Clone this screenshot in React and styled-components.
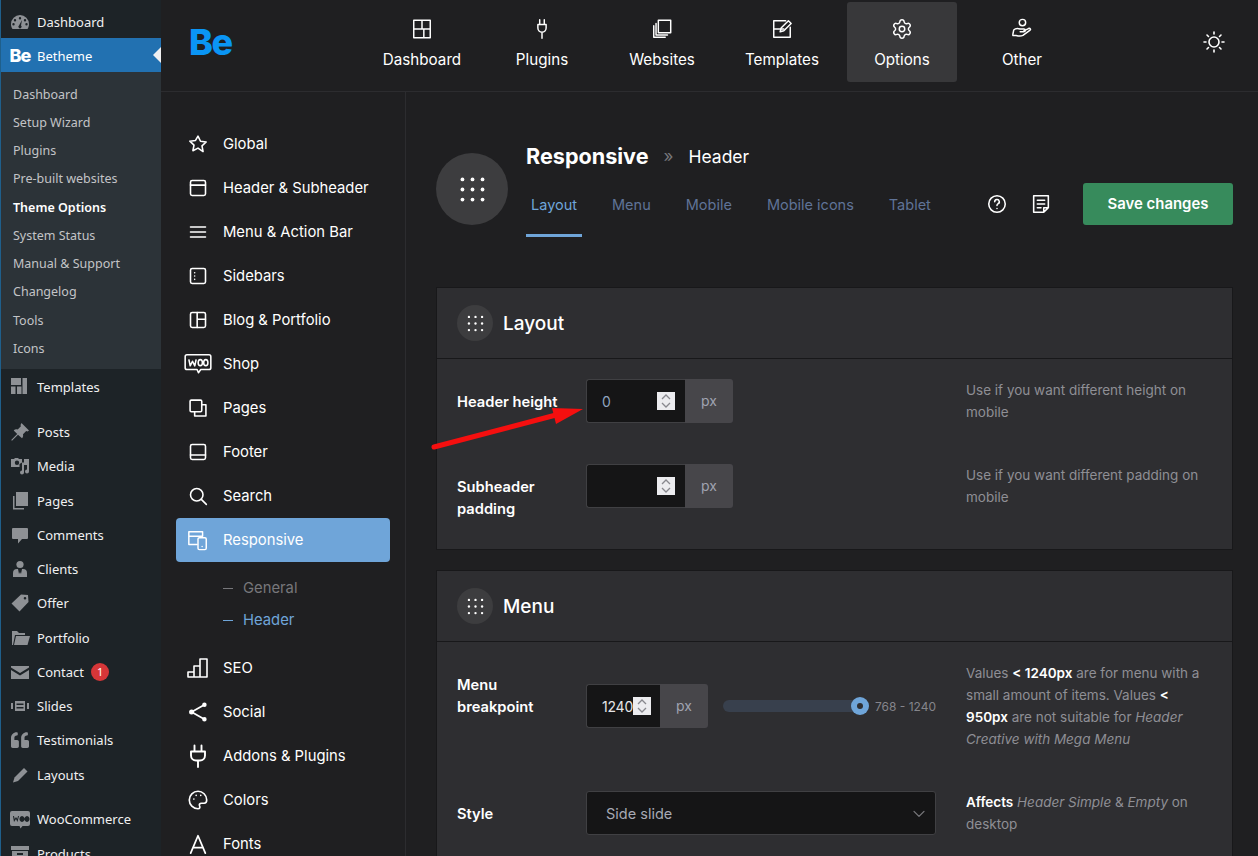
import React from "react"
import styled, { createGlobalStyle } from "styled-components"
import { Settings } from "lucide-react"
import { FaQuoteLeft } from "react-icons/fa"

const Global = createGlobalStyle`
  * { box-sizing: border-box; }
  html, body { margin: 0; height: 100%; overflow: hidden; background: #1f1f21; }
  body { font-family: Inter, "Liberation Sans", sans-serif; }
`

const Page = styled.div`
  position: relative;
  display: flex;
  width: 1258px;
  height: 856px;
  overflow: hidden;
`

/* wp admin menu */
const WpMenu = styled.nav`
  width: 161px;
  flex: none;
  background: #1d2327;
  border-left: 1px solid #1f5f8b;
  font-family: "Noto Sans", "Open Sans", sans-serif;
  font-size: 13px;
  padding-top: 5px;
  color: #f0f0f1;
`

const WpRow = styled.div`
  position: relative;
  display: flex;
  align-items: center;
  height: ${p => p.$h || 34.25}px;
  margin-top: ${p => p.$gap || 0}px;
  padding-left: 9px;
  padding-top: ${p => (p.$active ? 1 : 0)}px;
  gap: 7px;
  background: ${p => (p.$active ? "#2271b1" : "transparent")};
  color: ${p => (p.$active ? "#fff" : "#f0f0f1")};
  svg { flex: none; }
`

const WpIcon = styled.span`
  display: flex;
  align-items: center;
  justify-content: center;
  width: 20px;
  height: 20px;
  flex: none;
  color: ${p => p.$color || "#8e9195"};
`

const WpCaret = styled.span`
  position: absolute;
  right: 0;
  top: 50%;
  margin-top: -8px;
  border: 8px solid transparent;
  border-right-color: #f0f0f1;
  border-left: 0;
`

const WpSub = styled.div`
  background: #2c3338;
  padding: 8.5px 0 6px 12px;
`

const WpSubItem = styled.div`
  height: 28.25px;
  line-height: 28.25px;
  font-size: 12.5px;
  color: ${p => (p.$current ? "#fff" : "#c3c4c7")};
  font-weight: ${p => (p.$current ? 600 : 400)};
`

const WpLogo = styled.span`
  font-family: Inter, sans-serif;
  font-weight: 800;
  font-size: 18px;
  letter-spacing: -1px;
  line-height: 20px;
  color: #fff;
`

const Badge = styled.span`
  display: inline-block;
  width: 18px;
  height: 18px;
  line-height: 18px;
  border-radius: 50%;
  text-align: center;
  background: #d63638;
  color: #fff;
  font-size: 11px;
`

/* betheme app */
const App_ = styled.div`
  flex: 1;
  min-width: 0;
  display: flex;
  flex-direction: column;
`

const TopBar = styled.header`
  display: flex;
  height: 92px;
  flex: none;
  padding-top: 2px;
  border-bottom: 1px solid #2c2c2f;
`

const Logo = styled.div`
  width: 206px;
  flex: none;
  padding: 18px 0 0 28px;
  font-weight: 800;
  font-size: 36px;
  line-height: 44px;
  letter-spacing: -1.5px;
  color: #0a95f5;
`

const TopNav = styled.div`
  display: flex;
  gap: 10px;
`

const TopItem = styled.div`
  width: 110px;
  height: 80px;
  display: flex;
  flex-direction: column;
  align-items: center;
  padding-top: 16px;
  gap: 10px;
  border-radius: 3px;
  background: ${p => (p.$active ? "#38383a" : "transparent")};
  color: #fff;
  font-size: 15.2px;
  line-height: 20px;
  svg { height: 22px; flex: none; }
`

const ThemeToggle = styled.div`
  margin: 28px 0 0 125px;
  width: 24px;
  height: 24px;
  color: #fff;
`

const Body = styled.div`
  display: flex;
  flex: 1;
  min-height: 0;
`

const SideNav = styled.aside`
  width: 245px;
  flex: none;
  padding: 30px 15px 0;
  border-right: 1px solid #2c2c2f;
`

const SideItem = styled.div`
  display: flex;
  align-items: center;
  height: 44px;
  padding-left: 12px;
  gap: 15px;
  border-radius: 4px;
  font-size: 14.8px;
  color: #fff;
  background: ${p => (p.$active ? "#6fa5d9" : "transparent")};
`

const SideIcon = styled.span`
  display: flex;
  align-items: center;
  justify-content: center;
  width: 20px;
  height: 20px;
  flex: none;
  svg { flex: none; }
`

const SubList = styled.div`
  padding: 10px 0 10px 47px;
`

const SubLink = styled.div`
  display: flex;
  align-items: center;
  height: 32px;
  gap: 10px;
  font-size: 14.8px;
  color: ${p => (p.$active ? "#6fa5d9" : "#77777b")};
  &::before {
    content: "";
    width: 10px;
    height: 1px;
    background: currentColor;
  }
`

const Main = styled.main`
  flex: 1;
  min-width: 0;
  padding: 61px 25px 0 30px;
`

const PageHead = styled.div`
  display: flex;
  align-items: flex-start;
  height: 134px;
`

const HeadCircle = styled.div`
  width: 72px;
  height: 72px;
  flex: none;
  border-radius: 50%;
  background: #3d3d3f;
  display: flex;
  align-items: center;
  justify-content: center;
  margin-right: 18px;
  color: #fff;
`

const HeadMid = styled.div`
  width: 451px;
  flex: none;
`

const Crumbs = styled.div`
  display: flex;
  align-items: center;
  height: 30px;
  margin-top: -12px;
  color: #fff;
`

const Title = styled.span`
  font-size: 21.6px;
  font-weight: 700;
`

const Sep = styled.span`
  margin: 0 15px;
  font-size: 17px;
  color: #77777b;
`

const SubTitle = styled.span`
  margin-top: 1px;
  font-size: 17.5px;
`

const Tabs = styled.div`
  display: flex;
  margin-top: 17px;
  gap: 25px;
`

const Tab = styled.div`
  position: relative;
  height: 49px;
  line-height: 34px;
  padding: 0 5px;
  font-size: 14.5px;
  color: ${p => (p.$active ? "#6fa5d9" : "#5f7397")};
  ${p => p.$active && `
    &::after {
      content: "";
      position: absolute;
      left: 0;
      right: 0;
      bottom: 0;
      height: 3px;
      background: #6fa5d9;
    }
  `}
`

const HeadActions = styled.div`
  display: flex;
  align-items: center;
  margin-top: 30px;
  margin-left: 9px;
  color: #fff;
`

const ActionIcon = styled.span`
  display: flex;
  width: 22px;
  height: 22px;
  margin-right: 22px;
`

const SaveButton = styled.button`
  width: 150px;
  height: 42px;
  margin-left: 9px;
  border: 0;
  border-radius: 3px;
  background: #378b5c;
  color: #fff;
  font-family: inherit;
  font-weight: 600;
  font-size: 14.9px;
`

const Card = styled.section`
  background: #2e2e31;
  border: 1px solid #18181a;
  margin-bottom: 20px;
`

const CardHead = styled.div`
  display: flex;
  align-items: center;
  height: 71px;
  padding-left: 20px;
  gap: 10px;
  border-bottom: 1px solid #18181a;
  color: #fff;
  font-size: 19px;
  font-weight: 500;
`

const CardDot = styled.span`
  width: 36px;
  height: 36px;
  border-radius: 50%;
  background: #3d3d3f;
  display: flex;
  align-items: center;
  justify-content: center;
`

const CardBody = styled.div`
  padding-top: 20px;
`

const Row = styled.div`
  display: grid;
  grid-template-columns: 129px 350px 1fr;
  align-items: center;
  padding: 0 20px 41px;
`

const Label = styled.div`
  align-self: start;
  max-width: 110px;
  padding-top: 12px;
  margin-bottom: -12px;
  font-size: 14.7px;
  font-weight: 600;
  line-height: 22px;
  color: #fff;
`

const Control = styled.div`
  display: flex;
  align-items: center;
`

const NumberBox = styled.div`
  display: flex;
  align-items: center;
  justify-content: space-between;
  width: ${p => p.$w}px;
  height: 44px;
  padding: 0 10px 0 ${p => p.$pad}px;
  background: #151516;
  border: 1px solid #404043;
  border-right: 0;
  border-radius: 3px 0 0 3px;
  color: ${p => (p.$light ? "#e5e5e8" : "#8fa3bf")};
  font-size: 14px;
  letter-spacing: -0.2px;
`

const Spin = styled.span`
  display: flex;
  width: 18px;
  height: 18px;
  flex: none;
  background: #ececef;
  color: #88888e;
`

const Unit = styled.div`
  width: 48px;
  height: 44px;
  line-height: 44px;
  text-align: center;
  background: #47464a;
  border-radius: 0 3px 3px 0;
  font-size: 14px;
  color: #a0a3b0;
`

const Track = styled.div`
  position: relative;
  width: 137px;
  height: 12px;
  margin-left: 15px;
  background: #38404d;
  border-radius: 6px;
`

const Thumb = styled.span`
  position: absolute;
  right: -9px;
  top: -3px;
  width: 18px;
  height: 18px;
  border-radius: 50%;
  background: #6fa5d9;
  &::after {
    content: "";
    position: absolute;
    left: 6px;
    top: 6px;
    width: 6px;
    height: 6px;
    border-radius: 50%;
    background: #2e2e31;
  }
`

const Range = styled.span`
  margin-left: 15px;
  font-size: 12px;
  white-space: nowrap;
  color: #85858b;
`

const Select = styled.div`
  display: flex;
  align-items: center;
  justify-content: space-between;
  width: 350px;
  height: 44px;
  padding: 0 6px 0 19px;
  background: #151516;
  border: 1px solid #404043;
  border-radius: 3px;
  font-size: 14.5px;
  color: #a7a9b4;
  svg { color: #77777b; }
`

const Desc = styled.div`
  padding-left: 30px;
  font-size: 13.5px;
  line-height: 22px;
  color: #8f8f95;
  b { color: #fff; font-weight: 600; }
  em { font-style: italic; }
`

const Arrow = styled.svg`
  position: absolute;
  left: 425px;
  top: 400px;
  pointer-events: none;
`

/* icons */
const Stroke = ({ size = 22, w = 1.6, children }) => (
  <svg width={size} height={size} viewBox="0 0 24 24" fill="none" stroke="currentColor" strokeWidth={w} strokeLinecap="round" strokeLinejoin="round">
    {children}
  </svg>
)

const Solid = ({ children, size = 20 }) => (
  <svg width={size} height={size} viewBox="0 0 20 20" fill="currentColor">{children}</svg>
)

const Dots = ({ size = 29, r = 1.7 }) => (
  <svg width={size} height={size} viewBox="0 0 26 26" fill="#fff">
    {[4, 13, 22].map(y => [4, 13, 22].map(x => <circle key={`${x}-${y}`} cx={x} cy={y} r={r} />))}
  </svg>
)

const wpIcons = {
  dashboard: <Solid><path fillRule="evenodd" d="M10 3a9 9 0 0 0-9 9c0 2 .6 3.600 1.500 5h15c.9-1.400 1.500-3 1.500-5a9 9 0 0 0-9-9zM10 5a1.200 1.200 0 1 1 0 2.400A1.200 1.200 0 0 1 10 5zM5 7a1.200 1.200 0 1 1 0 2.400A1.200 1.200 0 0 1 5 7zm10 0a1.200 1.200 0 1 1 0 2.400A1.200 1.200 0 0 1 15 7zM3.500 11a1.200 1.200 0 1 1 0 2.400 1.200 1.200 0 0 1 0-2.400zm13 0a1.200 1.200 0 1 1 0 2.400 1.200 1.200 0 0 1 0-2.400zM12 8l-1 5.500a1.600 1.600 0 1 1-2 0z" /></Solid>,
  templates: <Solid size={20}><path d="M1 1h10v7H1zM12.500 1H17v16h-4.500zM1 9.500h4.500V17H1zM7 9.500h4.500V17H7z" /></Solid>,
  posts: <Solid><path d="M11.500 1l7.500 7.500-1.500 1-1.300-.4-3.200 3.200c.4 1.700 0 3-1 4L8 12.800l-6 6L1.200 18l6-6L3.700 8.500c1-1 2.300-1.400 4-1l3.200-3.200-.4-1.300z" /></Solid>,
  media: <Solid><path fillRule="evenodd" d="M1 3h3l1-1h3l1 1h3v3.500L9.500 8v3H1zm6 1.500a2.200 2.200 0 1 0 0 4.400 2.200 2.200 0 0 0 0-4.400z" /><path d="M14 3h5v12.500a2 2 0 1 1-2-2V9h-3v7.500a2 2 0 1 1-2-2V6.500h2z" /></Solid>,
  pages: <Solid><path d="M6 1h12v14H6z" /><path d="M3 5h1.500v12H14v1.500H3z" /></Solid>,
  comments: <Solid><path d="M3 3h14a1 1 0 0 1 1 1v9a1 1 0 0 1-1 1h-5l-4 4.500V14H3a1 1 0 0 1-1-1V4a1 1 0 0 1 1-1z" /></Solid>,
  clients: <Solid><circle cx="10" cy="5.500" r="3.600" /><path d="M3 18v-4a4 4 0 0 1 4-4h1l1 5 1-2 1 2 1-5h1a4 4 0 0 1 4 4v4z" /></Solid>,
  offer: <Solid><path fillRule="evenodd" d="M11 1.500l7 .5.500 7-9 9.500-8-8zM15 4a1.300 1.300 0 1 0 0 2.600A1.300 1.300 0 0 0 15 4z" /></Solid>,
  portfolio: <Solid><path d="M2 3h5l2 2h6v2H5l-2 10-1 .1zM6 8h14l-2.500 9H4z" /></Solid>,
  contact: <Solid><path d="M1 4h18v1.500l-9 5.500-9-5.500zM1 8l9 5.500L19 8v9H1z" /></Solid>,
  slides: <Solid><path fillRule="evenodd" d="M5 5h10v10H5zm1.500 2.500v1.500h7V7.500zm0 3.500v1.500h7V11z" /><path d="M1 7h2v6H1zM17 7h2v6h-2z" /></Solid>,
  testimonials: <FaQuoteLeft size={18} />,
  layouts: <Solid><path d="M14 3l3.500 3.500L8 16l-5 1.500L4.500 12.500z" /></Solid>,
  woo: <Solid><path fillRule="evenodd" d="M2 2h16a2 2 0 0 1 2 2v11a2 2 0 0 1-2 2h-5.500l-2 2.500-1-2.500H2a2 2 0 0 1-2-2V4a2 2 0 0 1 2-2zM3 7l1 6 2-3 1.500 3L9 7H8l-.7 3L6 8 4.700 10 4 7zm9 0a2.500 3 0 1 0 .01 0zm5 0a2.500 3 0 1 0 .01 0z" /></Solid>,
  products: <Solid><path fillRule="evenodd" d="M1 2h18v4H1zM2 7h16v11H2zm5 2v2h6V9z" /></Solid>
}

const HandIcon = () => (
  <Stroke size={22}>
    <circle cx="12.500" cy="5" r="3.500" />
    <path d="M2 18l1-5c2-2 4-2 7-1h4a1.500 1.500 0 0 1 0 3h-4" />
    <path d="M14 14l5-2.500c2-.8 3 1 1.500 2L13 19c-3 1.500-5 .8-8 0H2" />
  </Stroke>
)

const topItems = [
  ["Dashboard", <Stroke><path d="M3 2.500h18v19H3zM12 2.500V12M3 12h18M14 12v9.500" /></Stroke>],
  ["Plugins", <Stroke><path d="M9.500 2v5M14.500 2v5M7.500 7h9v4a4.500 4.500 0 0 1-9 0zM12 15.500V22" /></Stroke>],
  ["Websites", <Stroke><path d="M8 2.500h13.500V16H8zM5.500 6v12.500H18M3 8.500V21h12.500" /></Stroke>],
  ["Templates", <Stroke><path d="M21 10v11H3V3h13M3 12h11" /><path d="M19 3l3 3-8 8-4 1 1-4z" /></Stroke>],
  ["Options", <Settings size={22} strokeWidth={1.6} />],
  ["Other", <HandIcon />]
]

const sideItems = [
  ["Global", <Stroke size={20} w={1.9}><path d="M12 2.500l3 6.200 6.800.9-5 4.700 1.300 6.800L12 17l-6.100 3.100 1.300-6.800-5-4.700 6.800-.9z" /></Stroke>],
  ["Header & Subheader", <Stroke size={20} w={1.9}><rect x="3" y="3" width="18" height="18" rx="2" /><path d="M3 8.500h18" /></Stroke>],
  ["Menu & Action Bar", <Stroke size={20} w={1.9}><path d="M3 6h18M3 12h18M3 18h18" /></Stroke>],
  ["Sidebars", <Stroke size={20} w={1.9}><rect x="3" y="3" width="18" height="18" rx="2" /><path d="M8 8v.01M8 12v.01M8 16v.01" /></Stroke>],
  ["Blog & Portfolio", <Stroke size={20} w={1.9}><rect x="3" y="3" width="18" height="18" rx="2" /><path d="M11 3v18M11 11h10" /></Stroke>],
  ["Shop", (
    <svg width="28" height="22" viewBox="0 0 30 24" fill="none" stroke="#fff" strokeWidth="1.700" strokeLinejoin="round">
      <path d="M3 2h24a2 2 0 0 1 2 2v12a2 2 0 0 1-2 2H18l-2.500 3.500L14 18H3a2 2 0 0 1-2-2V4a2 2 0 0 1 2-2z" />
      <path d="M5 7l1.500 7 2.500-5 2.500 5L13 7" />
      <ellipse cx="17.500" cy="10.500" rx="2.300" ry="3.300" />
      <ellipse cx="23.500" cy="10.500" rx="2.300" ry="3.300" />
    </svg>
  )],
  ["Pages", <Stroke size={20} w={1.9}><rect x="2.500" y="2.500" width="14" height="14" rx="1.500" /><path d="M16.500 8h5v13.500H8v-5" /></Stroke>],
  ["Footer", <Stroke size={20} w={1.9}><rect x="3" y="3" width="18" height="18" rx="2" /><path d="M3 15.500h18" /></Stroke>],
  ["Search", <Stroke size={20} w={1.9}><circle cx="10.500" cy="10.500" r="7.500" /><path d="M16 16l6 6" /></Stroke>],
  ["Responsive", <Stroke size={22} w={1.6}><path d="M17 8V3H2v14h9M2 8h15" /><rect x="12" y="9.500" width="9" height="13" rx="1.500" /><path d="M16.500 19v.01" /></Stroke>],
  ["SEO", <Stroke size={24} w={1.6}><path d="M2 21v-5h6v5zM8 21V10h6v11zM14 21V3h7v18zM2 21h19" /></Stroke>],
  ["Social", <Stroke size={22} w={1.9}><path d="M19 4L5 12l14 8" /><circle cx="19" cy="4" r="1.500" fill="#fff" /><circle cx="5" cy="12" r="1.800" fill="#fff" /><circle cx="19" cy="20" r="1.500" fill="#fff" /></Stroke>],
  ["Addons & Plugins", <Stroke size={24} w={1.9}><path d="M8.500 1.500v6M15.500 1.500v6M5 7.500h14v4a5 5 0 0 1-5 5h-4a5 5 0 0 1-5-5zM12 16.500V23" /></Stroke>],
  ["Colors", <Stroke size={22} w={1.8}><path d="M12 2.500a9.500 9.500 0 0 0 0 19c2 0 2.500-1.500 1.700-3-.8-1.600.3-3 2-3h3c1.800 0 2.800-1.500 2.800-3.500 0-5.500-4.500-9.500-9.500-9.500z" /><path d="M7.500 11v.01M10 7v.01M15 7v.01" /></Stroke>],
  ["Fonts", <Stroke size={22} w={1.9}><path d="M4 22L12 3l8 19M6.500 16h11" /></Stroke>]
]

const wpTop = [
  ["Posts", "posts"], ["Media", "media"], ["Pages", "pages"], ["Comments", "comments"], ["Clients", "clients"],
  ["Offer", "offer"], ["Portfolio", "portfolio"], ["Contact", "contact"], ["Slides", "slides"],
  ["Testimonials", "testimonials"], ["Layouts", "layouts"]
]

const subItems = ["Dashboard", "Setup Wizard", "Plugins", "Pre-built websites", "Theme Options", "System Status", "Manual & Support", "Changelog", "Tools", "Icons"]

const Chevrons = () => (
  <svg width="18" height="18" viewBox="0 0 18 18" fill="none" stroke="currentColor" strokeWidth="1.300">
    <path d="M5 7l4-4 4 4M5 11l4 4 4-4" />
  </svg>
)

const NumberField = ({ value, w = 99, pad = 15, light }) => (
  <>
    <NumberBox $w={w} $pad={pad} $light={light}>
      <span>{value}</span>
      <Spin><Chevrons /></Spin>
    </NumberBox>
    <Unit>px</Unit>
  </>
)

const SectionHead = ({ children }) => (
  <CardHead>
    <CardDot><Dots size={19} r={1.6} /></CardDot>
    {children}
  </CardHead>
)

const App = () => {
  return (
    <Page>
      <Global />
      <WpMenu>
        <WpRow $h={33}>
          <WpIcon>{wpIcons.dashboard}</WpIcon>
          Dashboard
        </WpRow>
        <WpRow $h={34} $active>
          <WpIcon $color="#fff"><WpLogo>Be</WpLogo></WpIcon>
          Betheme
          <WpCaret />
        </WpRow>
        <WpSub>
          {subItems.map(item => (
            <WpSubItem key={item} $current={item === "Theme Options"}>{item}</WpSubItem>
          ))}
        </WpSub>
        <WpRow $h={36}>
          <WpIcon>{wpIcons.templates}</WpIcon>
          Templates
        </WpRow>
        <WpRow $gap={10}>
          <WpIcon>{wpIcons.posts}</WpIcon>
          Posts
        </WpRow>
        {wpTop.slice(1).map(([label, icon]) => (
          <WpRow key={label}>
            <WpIcon>{wpIcons[icon]}</WpIcon>
            {label}
            {label === "Contact" && <Badge>1</Badge>}
          </WpRow>
        ))}
        <WpRow $gap={10.5}>
          <WpIcon>{wpIcons.woo}</WpIcon>
          WooCommerce
        </WpRow>
        <WpRow>
          <WpIcon>{wpIcons.products}</WpIcon>
          Products
        </WpRow>
      </WpMenu>

      <App_>
        <TopBar>
          <Logo>Be</Logo>
          <TopNav>
            {topItems.map(([label, icon]) => (
              <TopItem key={label} $active={label === "Options"}>
                {icon}
                {label}
              </TopItem>
            ))}
          </TopNav>
          <ThemeToggle>
            <Stroke size={24} w={1.6}>
              <circle cx="12" cy="12" r="5" />
              <path d="M12 2v2M12 20v2M2 12h2M20 12h2M5 5l1.500 1.500M17.500 17.500L19 19M5 19l1.500-1.500M17.500 6.500L19 5" />
            </Stroke>
          </ThemeToggle>
        </TopBar>

        <Body>
          <SideNav>
            {sideItems.map(([label, icon]) => (
              <React.Fragment key={label}>
                <SideItem $active={label === "Responsive"}>
                  <SideIcon>{icon}</SideIcon>
                  {label}
                </SideItem>
                {label === "Responsive" && (
                  <SubList>
                    <SubLink>General</SubLink>
                    <SubLink $active>Header</SubLink>
                  </SubList>
                )}
              </React.Fragment>
            ))}
          </SideNav>

          <Main>
            <PageHead>
              <HeadCircle><Dots /></HeadCircle>
              <HeadMid>
                <Crumbs>
                  <Title>Responsive</Title>
                  <Sep>»</Sep>
                  <SubTitle>Header</SubTitle>
                </Crumbs>
                <Tabs>
                  <Tab $active>Layout</Tab>
                  <Tab>Menu</Tab>
                  <Tab>Mobile</Tab>
                  <Tab>Mobile icons</Tab>
                  <Tab>Tablet</Tab>
                </Tabs>
              </HeadMid>
              <HeadActions>
                <ActionIcon>
                  <Stroke size={22} w={1.7}>
                    <circle cx="12" cy="12" r="9" />
                    <path d="M9.500 9.500a2.500 2.500 0 1 1 3.500 2.300c-.7.400-1 .9-1 1.700M12 17v.01" />
                  </Stroke>
                </ActionIcon>
                <ActionIcon>
                  <Stroke size={22} w={1.7}>
                    <path d="M4 3h16v13l-5 5H4zM8 8h8M8 12h8M8 16h4M20 16h-5v5" />
                  </Stroke>
                </ActionIcon>
                <SaveButton>Save changes</SaveButton>
              </HeadActions>
            </PageHead>

            <Card>
              <SectionHead>Layout</SectionHead>
              <CardBody>
                <Row>
                  <Label>Header height</Label>
                  <Control><NumberField value="0" /></Control>
                  <Desc>Use if you want different height on mobile</Desc>
                </Row>
                <Row>
                  <Label>Subheader padding</Label>
                  <Control><NumberField value="" /></Control>
                  <Desc>Use if you want different padding on mobile</Desc>
                </Row>
              </CardBody>
            </Card>

            <Card>
              <SectionHead>Menu</SectionHead>
              <CardBody>
                <Row>
                  <Label>Menu breakpoint</Label>
                  <Control>
                    <NumberField value="1240" w={74} pad={15} light />
                    <Track><Thumb /></Track>
                    <Range>768 - 1240</Range>
                  </Control>
                  <Desc>
                    Values <b>&lt; 1240px</b> are for menu with a small amount of items. Values <b>&lt; 950px</b> are not suitable for <em>Header Creative with Mega Menu</em>
                  </Desc>
                </Row>
                <Row>
                  <Label>Style</Label>
                  <Control>
                    <Select>
                      Side slide
                      <Stroke size={20} w={1.5}><path d="M6 10l6 6 6-6" /></Stroke>
                    </Select>
                  </Control>
                  <Desc><b>Affects</b> <em>Header Simple</em> &amp; <em>Empty</em> on desktop</Desc>
                </Row>
              </CardBody>
            </Card>
          </Main>
        </Body>
      </App_>

      <Arrow width="165" height="60" viewBox="425 400 165 60">
        <path d="M434 447L556 415" stroke="#f50f0f" strokeWidth="5" strokeLinecap="round" />
        <path d="M583 409L552 408L556 424z" fill="#f50f0f" />
      </Arrow>
    </Page>
  )
}

export default App
